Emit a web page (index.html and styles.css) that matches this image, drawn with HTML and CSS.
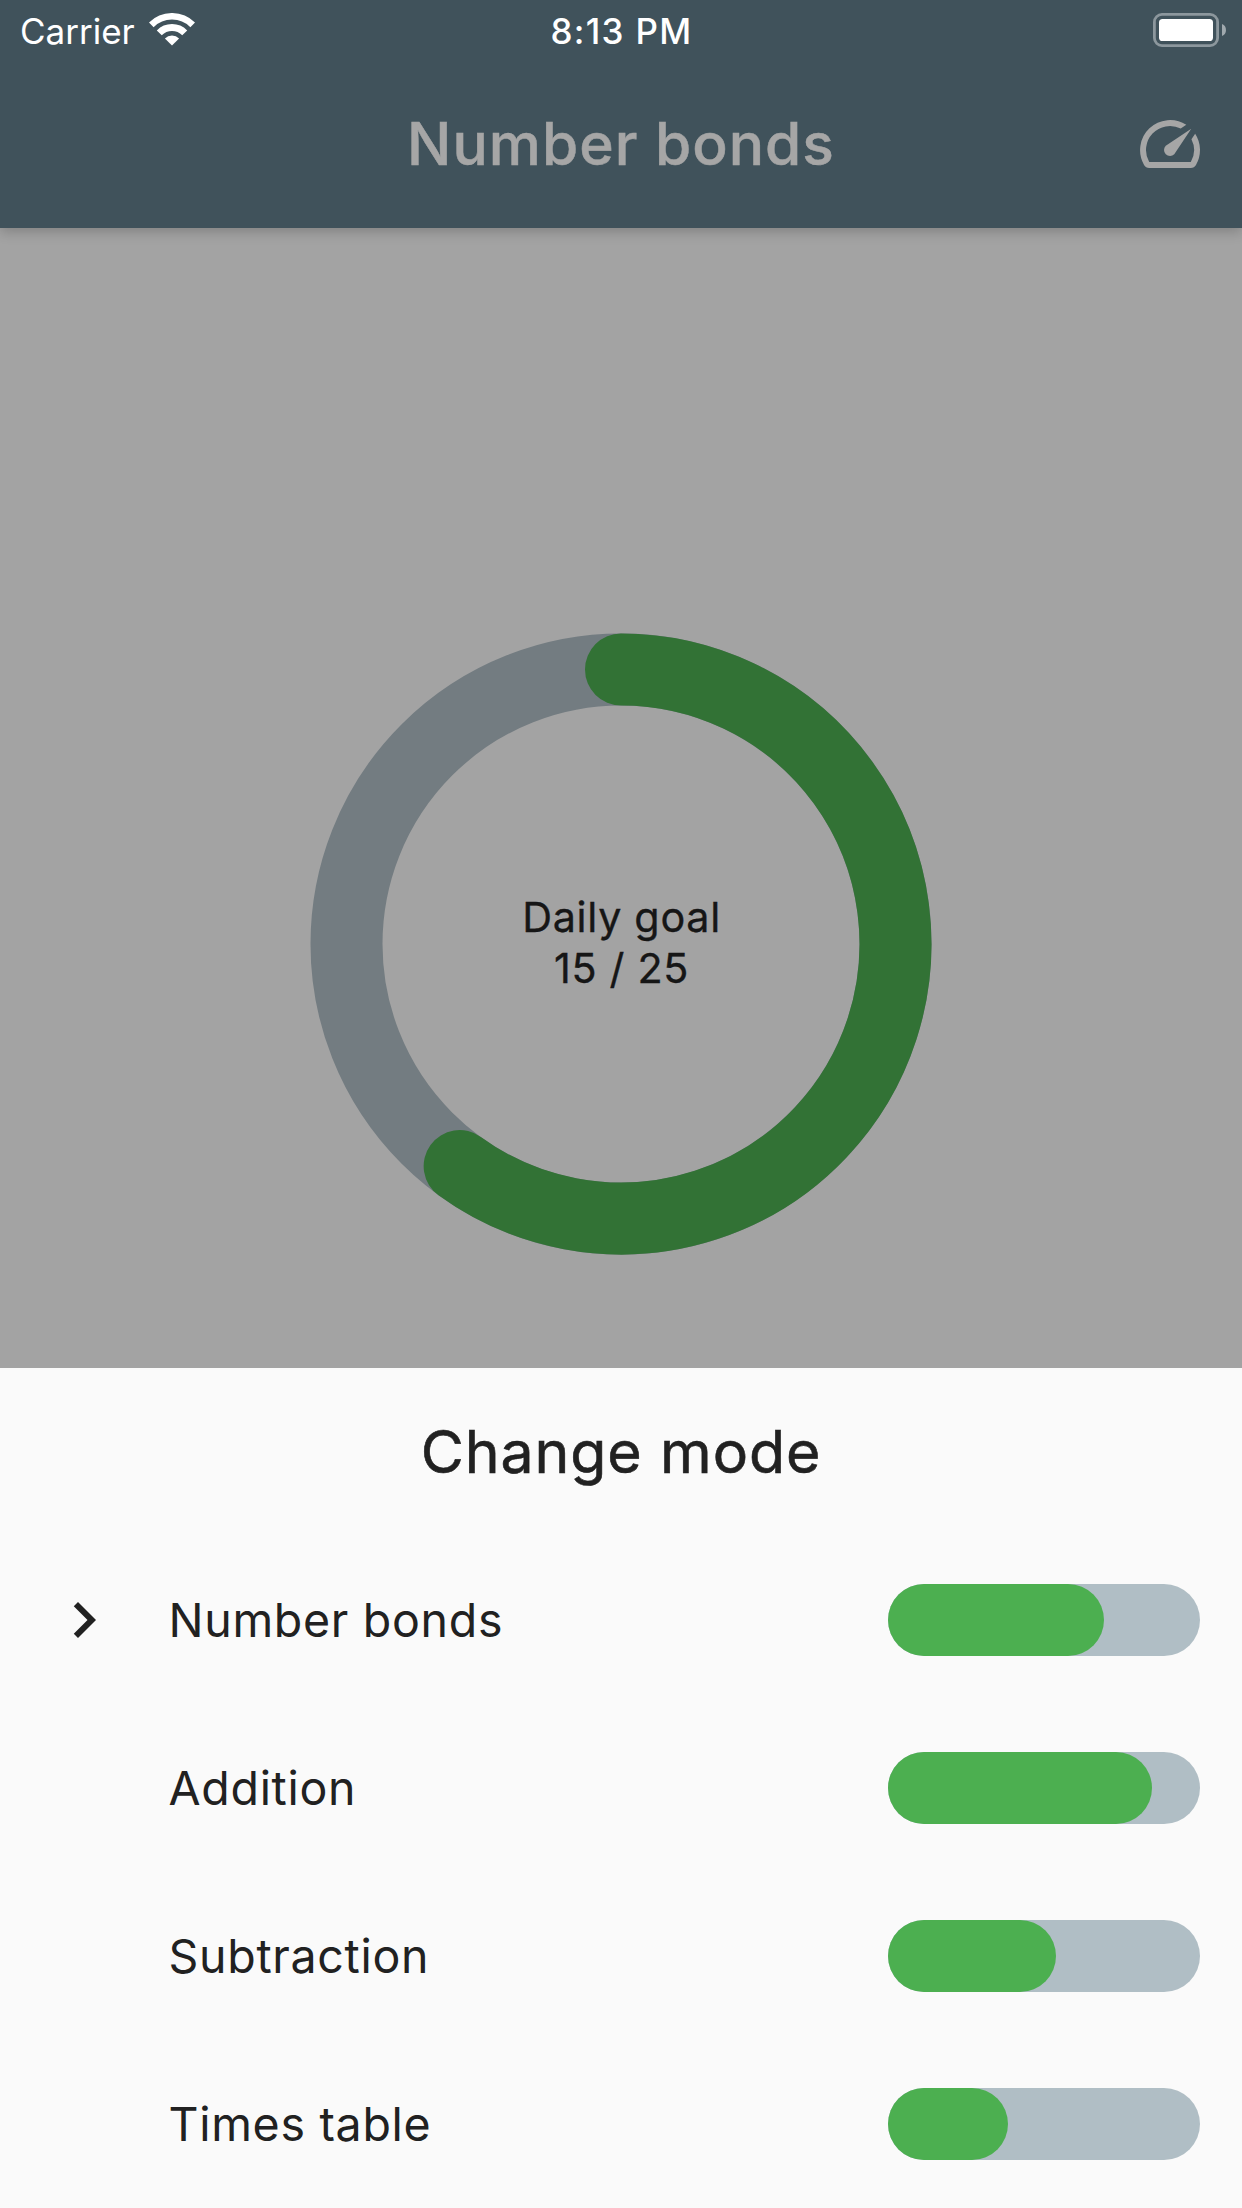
FILE: index.html
```
<!DOCTYPE html>
<html lang="en">
<head>
  <meta charset="utf-8">
  <title>Number bonds</title>
  <link rel="stylesheet" href="styles.css">
</head>
<body>
  <div class="screen">
    <header class="app-bar">
      <div class="status-bar">
        <div class="status-left">
          <span>Carrier</span>
          <svg class="wifi" width="46" height="34" viewBox="0 0 46 34">
            <g fill="none" stroke="#fff">
              <path d="M2.28 11.88a29.3 29.3 0 0 1 41.44 0" stroke-width="6.6"/>
              <path d="M10.27 19.87a18 18 0 0 1 25.46 0" stroke-width="7"/>
            </g>
            <path d="M23 32.6l-7.1-7.1a10 10 0 0 1 14.2 0z" fill="#fff"/>
          </svg>
        </div>
        <span class="clock">8:13 PM</span>
        <div class="status-right">
          <svg class="battery" width="74" height="34" viewBox="0 0 74 34">
            <rect x="1.4" y="1.4" width="63.2" height="31.2" rx="7.6" fill="none" stroke="#8c979d" stroke-width="2.8"/>
            <rect x="6" y="6" width="54" height="22" rx="3.6" fill="#fff"/>
            <path d="M69 11c5.300 1.500 5.300 10.500 0 12z" fill="#a0a9ae"/>
          </svg>
        </div>
      </div>
      <div class="toolbar">
        <h1 class="title">Number bonds</h1>
        <svg class="speed" width="72" height="72" viewBox="0 0 24 24">
          <path fill="currentColor" d="M20.38 8.57l-1.23 1.85a8 8 0 0 1-.22 7.58H5.07A8 8 0 0 1 15.58 6.85l1.85-1.23A10 10 0 0 0 3.35 19a2 2 0 0 0 1.72 1h13.85a2 2 0 0 0 1.74-1 10 10 0 0 0-.27-10.44zm-9.79 6.84a2 2 0 0 0 2.83 0l5.66-8.49-8.49 5.66a2 2 0 0 0 0 2.83z"/>
        </svg>
      </div>
    </header>

    <main class="goal">
      <div class="ring">
        <svg class="ring-art" width="622" height="622" viewBox="0 0 622 622" fill="none" stroke-width="72">
          <circle cx="311" cy="311" r="274.5" stroke="#737c81"/>
          <path d="M311 36.5A274.500 274.500 0 1 1 149.650 533.080" stroke="#327235" stroke-linecap="round"/>
        </svg>
        <div class="goal-text">
          <span>Daily goal</span>
          <span>15 / 25</span>
        </div>
      </div>
    </main>

    <section class="sheet">
      <h2 class="sheet-title">Change mode</h2>
      <ul class="modes">
        <li class="mode">
          <span class="lead">
            <svg width="72" height="72" viewBox="0 0 24 24"><path fill="#212121" d="M10 6L8.590 7.410 13.170 12l-4.580 4.590L10 18l6-6z"/></svg>
          </span>
          <span class="name">Number bonds</span>
          <span class="bar"><span class="fill" style="width:216px"></span></span>
        </li>
        <li class="mode">
          <span class="lead"></span>
          <span class="name">Addition</span>
          <span class="bar"><span class="fill" style="width:264px"></span></span>
        </li>
        <li class="mode">
          <span class="lead"></span>
          <span class="name">Subtraction</span>
          <span class="bar"><span class="fill" style="width:168px"></span></span>
        </li>
        <li class="mode">
          <span class="lead"></span>
          <span class="name">Times table</span>
          <span class="bar"><span class="fill" style="width:120px"></span></span>
        </li>
      </ul>
    </section>
  </div>
</body>
</html>
```
FILE: styles.css
```
* {
  box-sizing: border-box;
  margin: 0;
  padding: 0;
}

body {
  font-family: Inter, "Liberation Sans", sans-serif;
  color: #212121;
  background: #fafafa;
}

.screen {
  display: flex;
  flex-direction: column;
  width: 1242px;
  height: 2208px;
  overflow: hidden;
}

/* App bar */
.app-bar {
  z-index: 1;
  flex: none;
  height: 228px;
  background: #40525b;
  box-shadow: 0 4px 12px rgba(0, 0, 0, 0.2);
}

.status-bar {
  display: grid;
  grid-template-columns: 1fr auto 1fr;
  align-items: center;
  height: 60px;
  padding: 2px 15px 0 20px;
  color: #fff;
  font-size: 35px;
  line-height: 58px;
}

.status-left {
  display: flex;
  align-items: center;
  gap: 14px;
}

.wifi,
.battery {
  display: block;
  margin-top: -2px;
}

.clock {
  margin-left: -4px;
  font-weight: 500;
  letter-spacing: 1.3px;
}

.status-right {
  display: flex;
  justify-content: flex-end;
}

.toolbar {
  display: grid;
  grid-template-columns: 1fr auto 1fr;
  align-items: center;
  height: 168px;
  padding: 0 36px;
  color: #a6a6a6;
}

.title {
  grid-column: 2;
  font-size: 58.7px;
  font-weight: 500;
  letter-spacing: 1px;
  line-height: 72px;
  -webkit-text-stroke: 0.5px currentColor;
}

.speed {
  display: block;
  justify-self: end;
}

/* Daily goal */
.goal {
  display: flex;
  justify-content: center;
  flex: none;
  height: 1140px;
  padding-top: 405px;
  background: #a3a3a3;
}

.ring {
  display: grid;
  place-items: center;
  width: 622px;
  height: 622px;
}

.ring-art,
.goal-text {
  grid-area: 1 / 1;
}

.goal-text {
  display: flex;
  flex-direction: column;
  align-items: center;
  padding: 0 0 3px 1px;
  color: #161616;
  font-size: 41.3px;
  font-weight: 400;
  letter-spacing: 0.7px;
  line-height: 51px;
  -webkit-text-stroke: 0.35px currentColor;
}

/* Mode sheet */
.sheet {
  flex: 1;
  background: #fafafa;
}

.sheet-title {
  font-size: 59px;
  font-weight: 400;
  letter-spacing: 0.9px;
  line-height: 168px;
  text-align: center;
  -webkit-text-stroke: 0.6px currentColor;
}

.modes {
  list-style: none;
}

.mode {
  display: flex;
  align-items: center;
  height: 168px;
  padding: 0 42px 0 48px;
}

.lead {
  width: 120.5px;
  height: 72px;
}

.name {
  flex: 1;
  font-size: 46.5px;
  letter-spacing: 0.7px;
  line-height: 72px;
}

.bar {
  display: flex;
  width: 312px;
  height: 72px;
  border-radius: 36px;
  background: #b0bec5;
}

.fill {
  border-radius: 36px;
  background: #4caf50;
}
```
